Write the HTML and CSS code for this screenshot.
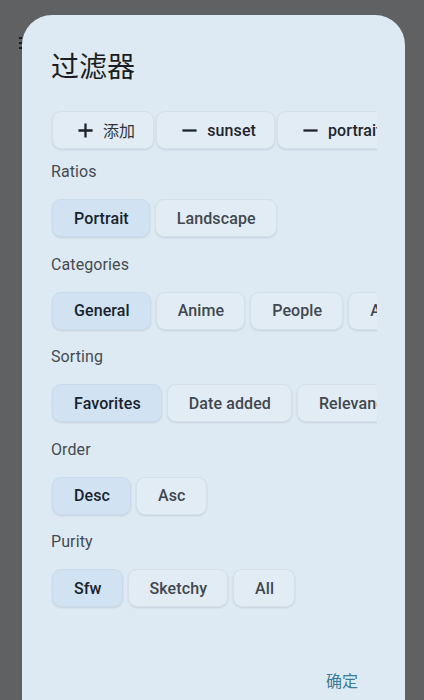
FILE: index.html
```html
<!DOCTYPE html>
<html lang="zh">
<head>
<meta charset="utf-8">
<title>过滤器</title>
<link rel="stylesheet" href="styles.css">
</head>
<body>
<div class="backdrop-icon"><span></span><span></span><span></span></div>
<div class="dialog">
  <h1 class="title">过滤器</h1>

  <div class="chips tags">
    <div class="chip">
      <svg class="ico" viewBox="0 0 18 18"><path d="M9 1.5v15M1.5 9h15" stroke="#1d2228" stroke-width="2.4" fill="none"/></svg>
      <span class="cjk">添加</span>
    </div>
    <div class="chip">
      <svg class="ico" viewBox="0 0 18 18"><path d="M1.5 9h15" stroke="#1d2228" stroke-width="2.4" fill="none"/></svg>
      <span class="strong">sunset</span>
    </div>
    <div class="chip">
      <svg class="ico" viewBox="0 0 18 18"><path d="M1.5 9h15" stroke="#1d2228" stroke-width="2.4" fill="none"/></svg>
      <span class="strong">portrait</span>
    </div>
  </div>

  <section class="group first">
    <div class="label">Ratios</div>
    <div class="chips">
      <div class="chip selected">Portrait</div>
      <div class="chip">Landscape</div>
    </div>
  </section>

  <section class="group">
    <div class="label">Categories</div>
    <div class="chips">
      <div class="chip selected">General</div>
      <div class="chip">Anime</div>
      <div class="chip">People</div>
      <div class="chip">All</div>
    </div>
  </section>

  <section class="group">
    <div class="label">Sorting</div>
    <div class="chips">
      <div class="chip selected">Favorites</div>
      <div class="chip">Date added</div>
      <div class="chip">Relevance</div>
    </div>
  </section>

  <section class="group">
    <div class="label">Order</div>
    <div class="chips">
      <div class="chip selected">Desc</div>
      <div class="chip">Asc</div>
    </div>
  </section>

  <section class="group">
    <div class="label">Purity</div>
    <div class="chips">
      <div class="chip selected">Sfw</div>
      <div class="chip">Sketchy</div>
      <div class="chip">All</div>
    </div>
  </section>

  <div class="footer">
    <button class="ok">确定</button>
  </div>
</div>
</body>
</html>
```
FILE: styles.css
```css
html, body {
  margin: 0;
  padding: 0;
}
body {
  background: #606163;
  width: 424px;
  height: 700px;
  overflow: hidden;
  font-family: Roboto, "Noto Sans CJK SC", sans-serif;
  position: relative;
}
.backdrop-icon {
  position: absolute;
  left: 19px;
  top: 37px;
  display: flex;
  flex-direction: column;
  gap: 3px;
}
.backdrop-icon span {
  width: 3px;
  height: 2px;
  background: #1c1c1c;
}
.dialog {
  position: relative;
  margin: 15px 0 0 22px;
  width: 383px;
  height: 685px;
  box-sizing: border-box;
  background: #deeaf3;
  border-radius: 30px 30px 0 0;
  padding: 32px 28px 0 29px;
  display: flex;
  flex-direction: column;
}
.title {
  margin: 0;
  font-family: "Noto Sans CJK SC", sans-serif;
  font-weight: 400;
  font-size: 28px;
  line-height: 36px;
  color: #1b1d21;
}
.chips {
  display: flex;
  gap: 5px;
  overflow: hidden;
  padding: 0 0 3px 1px;
  margin-bottom: -3px;
}
.chips.tags {
  margin-top: 28px;
  gap: 2px;
}
.chip {
  flex: none;
  height: 38px;
  box-sizing: border-box;
  padding: 0 20px 0 21px;
  display: flex;
  align-items: center;
  gap: 9px;
  border-radius: 9px;
  background: #e1ecf5;
  border: 1px solid #d5e1ea;
  box-shadow: 0 1px 2px rgba(40, 60, 80, 0.14);
  font-size: 16px;
  font-weight: 500;
  color: #41474e;
  letter-spacing: 0.1px;
}
.chips.tags .chip {
  padding: 0 18px 0 24px;
}
.chip .ico {
  width: 17px;
  height: 17px;
  flex: none;
}
.chip .cjk {
  font-family: "Noto Sans CJK SC", sans-serif;
  font-weight: 400;
  color: #30353b;
}
.chip .strong {
  color: #1f252c;
}
.chip.selected {
  background: #d1e3f3;
  border-color: #cadcec;
  color: #18222c;
}
.group {
  padding-top: 15.5px;
}
.group.first {
  padding-top: 11px;
}
.label {
  font-size: 16px;
  line-height: 24px;
  color: #454a51;
  margin-bottom: 15px;
  letter-spacing: 0.1px;
}
.footer {
  margin-top: auto;
  display: flex;
  justify-content: flex-end;
  padding: 0 7px 2px 0;
}
.ok {
  background: none;
  border: none;
  padding: 6px 12px;
  font-family: "Noto Sans CJK SC", sans-serif;
  font-size: 16px;
  line-height: 24px;
  color: #3a7b9b;
  cursor: pointer;
}
```
